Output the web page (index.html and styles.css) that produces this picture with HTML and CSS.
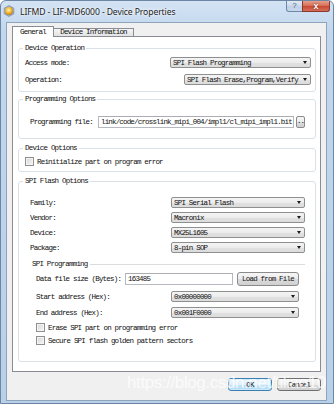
FILE: index.html
```html
<!DOCTYPE html>
<html lang="en">
<head>
    <meta charset="UTF-8">
    <meta name="viewport" content="width=device-width, initial-scale=1.0">
    <title>Device Properties</title>
    <link rel="stylesheet" href="styles.css">
</head>
<body>
    <div class="window">
        <div class="titlebar">
            <svg class="app-icon" width="12" height="12" viewBox="0 0 12 12">
                <defs>
                    <radialGradient id="bulb" cx="0.45" cy="0.4" r="0.6">
                        <stop offset="0" stop-color="#fff6b0"/>
                        <stop offset="0.6" stop-color="#f2b632"/>
                        <stop offset="1" stop-color="#c77a12"/>
                    </radialGradient>
                </defs>
                <path d="M6 0.5 L10.8 3.2 L10.8 8.8 L6 11.5 L1.2 8.8 L1.2 3.2 Z" fill="#9fb3c8" stroke="#6f8299" stroke-width="0.6"/>
                <circle cx="6" cy="6" r="4" fill="url(#bulb)"/>
            </svg>
            <span class="title">LIFMD - LIF-MD6000 - Device Properties</span>
            <div class="caption">
                <span class="cap-btn help">?</span>
                <span class="cap-btn close">x</span>
            </div>
        </div>

        <div class="client">
            <div class="tabs">
                <div class="tab active">General</div>
                <div class="tab">Device Information</div>
            </div>

            <div class="panel">
                <fieldset class="group group-op">
                    <legend>Device Operation</legend>
                    <div class="row">
                        <span class="label">Access mode:</span>
                        <div class="combo" style="width: 141px">SPI Flash Programming</div>
                    </div>
                    <div class="row row-gap">
                        <span class="label">Operation:</span>
                        <div class="combo" style="width: 127px">SPI Flash Erase,Program,Verify</div>
                    </div>
                </fieldset>

                <fieldset class="group group-prog">
                    <legend>Programming Options</legend>
                    <div class="row indent">
                        <span class="label">Programming file:</span>
                        <div class="input file-input">link/code/crosslink_mipi_004/impl1/cl_mipi_impl1.bit</div>
                        <div class="btn browse">..</div>
                    </div>
                </fieldset>

                <fieldset class="group group-dev">
                    <legend>Device Options</legend>
                    <div class="row">
                        <span class="check"></span>
                        <span class="label">Reinitialize part on program error</span>
                    </div>
                </fieldset>

                <fieldset class="group group-spi">
                    <legend>SPI Flash Options</legend>
                    <div class="row indent">
                        <span class="label">Family:</span>
                        <div class="combo" style="width: 134px">SPI Serial Flash</div>
                    </div>
                    <div class="row indent row-list">
                        <span class="label">Vendor:</span>
                        <div class="combo" style="width: 134px">Macronix</div>
                    </div>
                    <div class="row indent row-list">
                        <span class="label">Device:</span>
                        <div class="combo" style="width: 134px">MX25L1605</div>
                    </div>
                    <div class="row indent row-list">
                        <span class="label">Package:</span>
                        <div class="combo" style="width: 134px">8-pin SOP</div>
                    </div>

                    <div class="subgroup">
                        <div class="sub-title"><span>SPI Programming</span></div>
                        <div class="row sub-row data-row">
                            <span class="label">Data file size (Bytes):</span>
                            <div class="input data-input">163485</div>
                            <div class="btn load">Load from File</div>
                        </div>
                        <div class="row sub-row addr-row">
                            <span class="label">Start address (Hex):</span>
                            <div class="combo" style="width: 128px">0x00000000</div>
                        </div>
                        <div class="row sub-row addr-row">
                            <span class="label">End address (Hex):</span>
                            <div class="combo" style="width: 128px">0x001F0000</div>
                        </div>
                        <div class="row sub-row check-row">
                            <span class="check"></span>
                            <span class="label">Erase SPI part on programming error</span>
                        </div>
                        <div class="row sub-row check-row2">
                            <span class="check"></span>
                            <span class="label">Secure SPI flash golden pattern sectors</span>
                        </div>
                    </div>
                </fieldset>
            </div>

            <div class="buttons">
                <div class="btn dlg-btn default">OK</div>
                <div class="btn dlg-btn">Cancel</div>
            </div>

            <div class="watermark">https://blog.csdn.net/tiliao10</div>
        </div>
    </div>
</body>
</html>
```

FILE: styles.css
```css
* {
    box-sizing: border-box;
}
body {
    margin: 0;
    background: #ffffff;
    font-family: "Liberation Mono", "DejaVu Sans Mono", monospace;
    font-size: 7.5px;
    letter-spacing: -0.8px;
    color: #111;
}
.window {
    width: 334px;
    height: 404px;
    border: 1px solid #6d86a3;
    border-radius: 6px 6px 0 0;
    background: linear-gradient(180deg, #d3e3f4 0, #c2d7ed 30px, #b9d0e9 100%);
    padding: 0 6px 2px 5px;
    display: flex;
    flex-direction: column;
    overflow: hidden;
}

/* title bar */
.titlebar {
    height: 21px;
    margin: 0 -6px 0 -5px;
    padding: 0 3px 0 2px;
    display: flex;
    align-items: center;
}
.app-icon {
    flex: none;
    margin-right: 5px;
    margin-top: -1px;
}
.title {
    font-family: "Noto Sans", "Open Sans", sans-serif;
    font-size: 8.6px;
    letter-spacing: -0.1px;
    color: #1b1b1b;
    text-shadow: 0 0 4px #ffffff, 0 0 2px #ffffff;
}
.caption {
    margin-left: auto;
    align-self: flex-start;
    margin-top: -1px;
    display: flex;
}
.cap-btn {
    height: 12px;
    display: flex;
    align-items: center;
    justify-content: center;
    font-family: "Liberation Sans", sans-serif;
    letter-spacing: 0;
    border: 1px solid #6c86a6;
    border-top: none;
}
.help {
    width: 17px;
    font-size: 8px;
    color: #4b5d73;
    border-radius: 0 0 0 3px;
    background: linear-gradient(180deg, #e3ecf6 0, #cfdcec 50%, #bccfe6 51%, #c9d9ec 100%);
}
.close {
    width: 28px;
    margin-left: -1px;
    font-size: 9px;
    font-weight: bold;
    color: #ffffff;
    border-color: #8a3a2c;
    border-radius: 0 0 3px 0;
    background: linear-gradient(180deg, #e9a997 0, #d7725a 50%, #c4432d 51%, #d6705a 100%);
    text-shadow: 0 0 2px #6b1a10;
}

/* client area */
.client {
    flex: 1;
    position: relative;
    background: #f0f0f0;
    border: 1px solid #8ea4bd;
    padding: 3px 5px 0 5px;
}
.tabs {
    display: flex;
    align-items: flex-end;
    height: 10px;
    position: relative;
    z-index: 1;
}
.tab {
    height: 8px;
    line-height: 7px;
    border: 1px solid #898c95;
    border-bottom: none;
    border-left: none;
    background: linear-gradient(180deg, #f5f5f5, #e3e3e3);
    text-align: center;
    width: 80px;
}
.tab.active {
    width: 42px;
    height: 11px;
    margin-bottom: -1px;
    line-height: 10px;
    background: #ffffff;
    border-left: 1px solid #898c95;
}
.panel {
    height: 336px;
    background: #ffffff;
    border: 1px solid #898c95;
    padding: 6px 4px 0 5px;
}

/* group boxes */
.group {
    margin: 0;
    min-width: 0;
    border: 1px solid #d9e1e6;
    border-radius: 3px;
    padding: 4px 4px 6px 6px;
}
.group legend {
    padding: 0 2px;
    margin-left: -2px;
    line-height: 10px;
}
.group-prog {
    margin-top: 2px;
    padding-top: 12px;
    padding-bottom: 11px;
}
.group-dev {
    margin-top: 4px;
    padding-bottom: 5px;
}
.group-spi {
    margin-top: 4px;
    padding-top: 11px;
    padding-bottom: 16px;
}
.row {
    display: flex;
    align-items: center;
    height: 11px;
}
.row-gap {
    margin-top: 6px;
}
.row-list {
    margin-top: 4px;
}
.indent {
    padding-left: 5px;
    padding-right: 6px;
}
.label {
    flex: 1;
    white-space: nowrap;
}

/* controls */
.combo {
    flex: none;
    height: 11px;
    display: flex;
    align-items: center;
    justify-content: space-between;
    padding: 0 3px 0 2px;
    border: 1px solid #8e8f8f;
    border-radius: 2px;
    background: linear-gradient(180deg, #f4f4f4 0, #ececec 50%, #e1e1e1 51%, #dcdcdc 100%);
    white-space: nowrap;
}
.combo::after {
    content: "";
    border-left: 2.5px solid transparent;
    border-right: 2.5px solid transparent;
    border-top: 3px solid #1a1a1a;
}
.input {
    flex: none;
    height: 12px;
    display: flex;
    align-items: center;
    padding: 0 2px;
    background: #ffffff;
    border: 1px solid #b6b9c0;
    border-top-color: #abadb3;
    white-space: nowrap;
    overflow: hidden;
}
.file-input {
    width: 196px;
    letter-spacing: -0.83px;
}
.btn {
    flex: none;
    display: flex;
    align-items: center;
    justify-content: center;
    border: 1px solid #8a8a8a;
    border-radius: 2px;
    background: linear-gradient(180deg, #f6f6f6 0, #ebebeb 50%, #dddddd 51%, #cfcfcf 100%);
    white-space: nowrap;
}
.browse {
    width: 9px;
    height: 12px;
    margin-left: 2px;
    align-items: flex-end;
    padding-bottom: 2px;
    letter-spacing: -1px;
}
.check {
    flex: none;
    width: 9px;
    height: 9px;
    margin-right: 3px;
    border: 1px solid #8f8f8f;
    background: linear-gradient(135deg, #d6d6d6, #f6f6f6);
    box-shadow: inset 0 0 0 1px #f4f4f4;
}
.group-dev .row {
    height: 9px;
}

/* SPI programming sub group */
.subgroup {
    margin-top: 6px;
}
.sub-title {
    display: flex;
    align-items: center;
    height: 10px;
    padding: 0 6px 0 7px;
}
.sub-title::after {
    content: "";
    flex: 1;
    height: 1px;
    margin-left: 2px;
    background: #dcdcdc;
}
.sub-row {
    padding-left: 11px;
    padding-right: 12px;
}
.data-row {
    height: 14px;
    margin-top: 3px;
}
.data-input {
    width: 108px;
    margin-right: 4px;
}
.load {
    width: 62px;
    height: 14px;
    border-radius: 3px;
}
.addr-row {
    margin-top: 5px;
}
.check-row {
    height: 9px;
    margin-top: 5px;
}
.check-row2 {
    height: 9px;
    margin-top: 4px;
}

/* dialog buttons */
.buttons {
    display: flex;
    justify-content: flex-end;
    gap: 5px;
    margin-top: 6px;
}
.dlg-btn {
    width: 44px;
    height: 13px;
    border-radius: 3px;
    border-color: #707070;
}
.dlg-btn.default {
    border-color: #3c7fb1;
    background: linear-gradient(180deg, #edf7fd 0, #def0fb 50%, #c4e5f8 51%, #b4dcf4 100%);
    box-shadow: inset 0 0 0 1px #cbe9fb;
}
.watermark {
    position: absolute;
    left: 120px;
    top: 350px;
    font-family: "Liberation Sans Narrow", "Liberation Sans", sans-serif;
    font-size: 17px;
    letter-spacing: -0.4px;
    color: rgba(255, 255, 255, 0.75);
    white-space: nowrap;
    pointer-events: none;
}
```
